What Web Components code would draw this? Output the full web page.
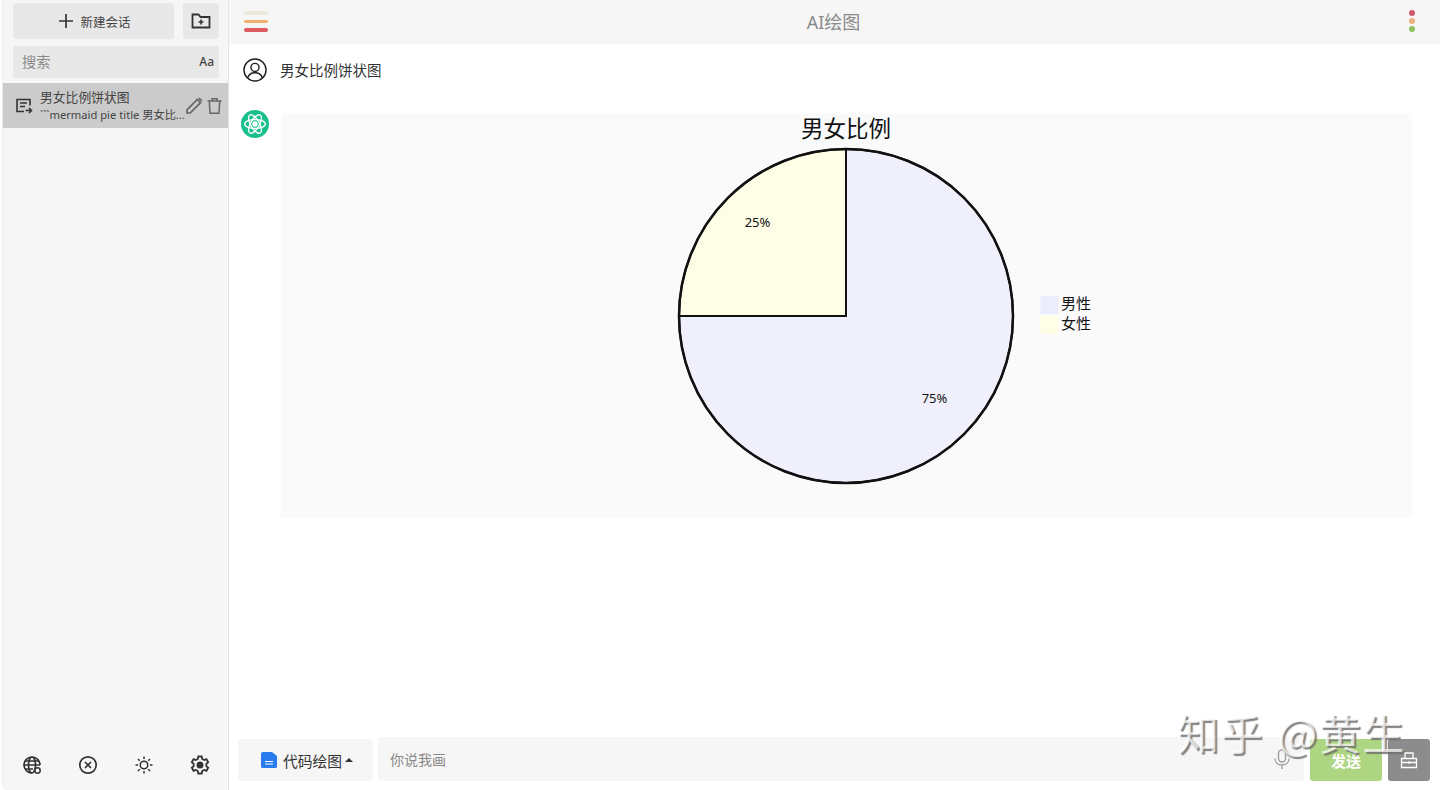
<!DOCTYPE html>
<html lang="zh"><head><meta charset="utf-8"><title>AI绘图</title>
<style>
html,body{margin:0;padding:0;height:790px;overflow:hidden;background:#fff;font-family:"Noto Sans","Noto Sans CJK SC",sans-serif;color:#333}
</style></head><body>
<app-shell>
  <side-bar slot="side"></side-bar>
  <top-bar slot="main"></top-bar>
  <chat-log slot="main"></chat-log>
  <input-bar slot="main"></input-bar>
  <water-mark slot="over"></water-mark>
</app-shell>
<script>
const def=(name,html)=>customElements.define(name,class extends HTMLElement{constructor(){super();this.attachShadow({mode:'open'}).innerHTML=html}});
def('app-shell',`<style>:host{display:flex;width:1440px;height:790px;position:relative;overflow:hidden}
.s{display:block;flex:none}.m{flex:1;display:flex;flex-direction:column;min-width:0}</style>
<div class="s"><slot name="side"></slot></div><div class="m"><slot name="main"></slot></div><slot name="over"></slot>`);

def('side-bar',`<style>
:host{display:flex;flex-direction:column;box-sizing:border-box;height:790px;margin-left:3px;width:226px;background:#f6f6f6;border-right:1px solid #e4e4e4;border-bottom-left-radius:6px;box-shadow:-1px 0 0 #ececec}
.top{display:flex;gap:9px;padding:3px 9px 0 10px}
.btn{height:36px;background:#e8e8e8;border-radius:3px;display:flex;align-items:center;justify-content:center}
.new{width:161px;font-size:12.500px;color:#444;gap:5px;padding-left:1px;box-sizing:border-box}
.folder{width:36px}
.search{display:flex;align-items:center;justify-content:space-between;height:32px;margin:7px 9px 0 10px;padding:0 5px 0 9px;background:#e8e8e8;border-radius:3px;font-size:14.200px;color:#8a8a8a}
.search span{margin-bottom:2px}
.search b{font-size:12px;font-weight:500;color:#444;margin-bottom:1px}
.item{display:flex;align-items:center;height:45px;margin-top:5px;background:#cbcbcb;box-sizing:border-box;padding-left:12px}
.item>svg{flex:none}
.txt{margin-left:7px;width:143px;min-width:0;flex:none}
.t{font-size:12.800px;line-height:16px;color:#444;margin-bottom:2px}
.d{font-size:11.200px;line-height:16px;color:#444;white-space:nowrap}
.acts{display:flex;gap:2px;align-items:center;margin-left:2px}
.fill{flex:1}
.bot{display:flex;justify-content:space-between;padding:0 18px 14px 19px;height:22px;align-items:center}
svg{display:block}
</style>
<div class="top"><div class="btn new"><svg width="18" height="18" viewBox="0 0 18 18"><path d="M9 2v14M2 9h14" stroke="#333" stroke-width="1.700" fill="none"/></svg><span>新建会话</span></div>
<div class="btn folder"><svg width="20" height="18" viewBox="0 0 20 18" fill="none" stroke="#333" stroke-width="1.800"><path d="M1.500 15.500V2.500h6l2 2.500h9v10.500z"/><path d="M10 7.500v5M7.500 10h5" stroke-width="1.600"/></svg></div></div>
<div class="search"><span>搜索</span><b>Aa</b></div>
<div class="item"><svg width="18" height="18" viewBox="0 0 18 18" fill="none" stroke="#333" stroke-width="1.600"><path d="M9 14.500H2V2.500h13v6"/><path d="M5 6h7M5 9.500h5"/><path d="M10.500 13.500h6M14 11l2.500 2.500L14 16"/></svg>
<div class="txt"><div class="t">男女比例饼状图</div><div class="d">\`\`\`mermaid pie title 男女比...</div></div>
<div class="acts"><svg width="19" height="19" viewBox="0 0 19 19" fill="none" stroke="#666" stroke-width="1.700"><path d="M2 13.800V17h3.200L15.500 6.700l-3.200-3.200zM13.800 2l3.200 3.200"/></svg>
<svg width="18" height="18" viewBox="0 0 18 18" fill="none" stroke="#666" stroke-width="1.500"><path d="M1.500 4h14M6 4V1.800h5V4M3.300 4l.7 12.200h9L13.700 4"/></svg></div></div>
<div class="fill"></div>
<div class="bot">
<svg width="20" height="20" viewBox="0 0 20 20" fill="none" stroke="#333" stroke-width="1.700"><path d="M10 18a8 8 0 1 1 8-8"/><ellipse cx="10" cy="10" rx="3.500" ry="8"/><path d="M2 10h16M3 6h14M3 14h8"/><circle cx="15.500" cy="15.500" r="2.700" stroke-width="1.500"/></svg>
<svg width="20" height="20" viewBox="0 0 20 20" fill="none" stroke="#333" stroke-width="1.700"><circle cx="10" cy="10" r="8.200"/><path d="M7 7l6 6M13 7l-6 6"/></svg>
<svg width="20" height="20" viewBox="0 0 20 20" fill="none" stroke="#333" stroke-width="1.500"><circle cx="10" cy="10" r="3.800"/><path d="M10 1.500v2.500M10 16v2.500M1.500 10H4M16 10h2.500M4 4l1.700 1.700M14.300 14.300L16 16M4 16l1.700-1.700M14.300 5.700L16 4"/></svg>
<svg width="20" height="20" viewBox="0 0 20 20" fill="none" stroke="#333" stroke-width="1.800"><path d="M8.300 1.500h3.400l.5 2.500 1.900 1 2.400-.8 1.700 3-1.900 1.700v2.200l1.900 1.700-1.700 3-2.400-.8-1.900 1-.5 2.500H8.300l-.5-2.500-1.900-1-2.400.8-1.700-3 1.900-1.700V8.900L1.800 7.200l1.700-3 2.400.8 1.900-1z"/><circle cx="10" cy="10" r="2.600" fill="#333"/></svg>
</div>`);

def('top-bar',`<style>:host{display:block;flex:none;height:44px;background:#f6f6f6;position:relative}
.w{display:flex;align-items:center;justify-content:space-between;height:42px;padding:0 25px 0 15px}
.burger{display:flex;flex-direction:column;gap:5px;width:24px;margin-top:1px}.burger i{display:block;height:3.500px;border-radius:2px}
h1{margin:0;font-size:18px;font-weight:400;color:#8a8a8a;position:relative;left:-5px}
.dots{display:flex;flex-direction:column;gap:2px;width:6px}.dots i{display:block;width:6px;height:6px;border-radius:50%}
</style><div class="w"><div class="burger"><i style="background:#ece8d8"></i><i style="background:#eeb06e"></i><i style="background:#dd5a62"></i></div><h1>AI绘图</h1><div class="dots"><i style="background:#cf5a6e"></i><i style="background:#ecb27c"></i><i style="background:#90bf5e"></i></div></div>`);

def('chat-log',`<style>:host{display:block;flex:1;min-height:0;font-size:14.500px;color:#333}
.q{display:flex;align-items:center;height:52px;padding-left:14px;gap:13px}
.q span{margin-bottom:2px}
.a{display:flex;padding-left:12px;gap:12px;margin-top:14px}
.av{width:28px;height:28px;border-radius:50%;background:#19c08c;display:flex;align-items:center;justify-content:center;flex:none}
.card{width:1131px;height:405px;background:#fafafa;margin-top:3px}
svg{display:block}
text{font-family:"Noto Sans","Noto Sans CJK SC",sans-serif;fill:#111}
</style>
<div class="q"><svg width="24" height="24" viewBox="0 0 25 25" fill="none" stroke="#222" stroke-width="1.500"><circle cx="12.500" cy="12.500" r="11.500"/><circle cx="12.500" cy="9.800" r="4.200"/><path d="M4.800 20.800c1-3.700 4-5.500 7.700-5.500s6.700 1.800 7.700 5.500"/></svg><span>男女比例饼状图</span></div>
<div class="a"><div class="av"><svg width="24" height="24" viewBox="0 0 22 22" fill="none" stroke="#fff" stroke-width="1.200"><ellipse cx="11" cy="11" rx="9.500" ry="4"/><ellipse cx="11" cy="11" rx="9.500" ry="4" transform="rotate(60 11 11)"/><ellipse cx="11" cy="11" rx="9.500" ry="4" transform="rotate(120 11 11)"/><circle cx="11" cy="11" r="2.500" fill="#fff" stroke="none"/></svg></div>
<div class="card"><svg width="1131" height="405" viewBox="0 0 1131 405">
<g transform="translate(565,203)">
<path d="M0 0V-167A167 167 0 1 1 -167 0Z" fill="#f0f0fc" stroke="#111" stroke-width="2"/>
<path d="M0 0H-167A167 167 0 0 1 0 -167Z" fill="#fefee6" stroke="#111" stroke-width="2"/>
<path d="M0 -167A167 167 0 1 1 -167 0A167 167 0 0 1 0 -167Z" fill="none" stroke="#111" stroke-width="2.500"/>
<text x="-88.500" y="-92.500" font-size="13" text-anchor="middle" dominant-baseline="middle">25%</text>
<text x="88.500" y="83.500" font-size="13" text-anchor="middle" dominant-baseline="middle">75%</text>
<text x="0" y="-187.500" font-size="22.500" text-anchor="middle" dominant-baseline="central">男女比例</text>
<rect x="194.500" y="-20" width="18" height="18" fill="#ececfc"/><text x="215" y="-11" font-size="15" dominant-baseline="middle">男性</text>
<rect x="194.500" y="0" width="18" height="18" fill="#fefee6"/><text x="215" y="9" font-size="15" dominant-baseline="middle">女性</text>
</g></svg></div></div>`);

def('input-bar',`<style>:host{display:flex;flex:none;height:44px;padding:0 10px 9px 9px;gap:5px;align-items:stretch}
.mode{width:135px;height:42px;align-self:flex-end;background:#f6f6f6;border-radius:3px;display:flex;align-items:center;justify-content:center;font-size:14.800px;color:#333;gap:6px;padding-left:3px;box-sizing:border-box}
.in{flex:1;background:#f6f6f6;border-radius:3px;display:flex;align-items:center;justify-content:space-between;padding:0 14px 0 12px;font-size:14px;color:#888}
.send{width:72px;height:42px;align-self:flex-end;background:#aed581;border-radius:3px;color:#fff;font-weight:700;font-size:15px;display:flex;align-items:center;justify-content:center;margin-left:1px}
.clr{width:42px;height:42px;align-self:flex-end;background:#8c8c8c;border-radius:3px;display:flex;align-items:center;justify-content:center;margin-left:1px}
.car{width:0;height:0;border:4px solid transparent;border-top:0;border-bottom:4px solid #333;margin-left:-3px}
svg{display:block}
</style>
<div class="mode"><svg width="16" height="16" viewBox="0 0 16 16"><path d="M2 0h9l5 4v10.500a1.500 1.500 0 0 1-1.500 1.500h-13A1.500 1.500 0 0 1 0 14.500V2a2 2 0 0 1 2-2z" fill="#2a7af0"/><path d="M4 9.500h8M4 12h8" stroke="#fff" stroke-width="1.200"/></svg><span>代码绘图</span><i class="car"></i></div>
<div class="in"><span>你说我画</span><svg width="16" height="20" viewBox="0 0 16 20" fill="none" stroke="#a0a0a0" stroke-width="1.400"><rect x="4.500" y="1" width="7" height="12" rx="3.500"/><path d="M1 9.500c0 4 3 6.500 7 6.500s7-2.500 7-6.500M8 16v4"/></svg></div>
<div class="send">发送</div>
<div class="clr"><svg width="18" height="18" viewBox="0 0 18 18" fill="none" stroke="#fff" stroke-width="1.300"><path d="M1.500 7.500h15V16.500h-15zM5 7.500V2h8v5.500M1.500 11.500h15M9 10v3"/></svg></div>`);

def('water-mark',`<style>:host{position:absolute;left:1177px;top:704px;font:400 42px/56px "Noto Sans CJK SC",sans-serif;color:rgba(255,255,255,.7);text-shadow:2px 2px 1px rgba(110,110,110,.85);white-space:nowrap;letter-spacing:1.400px;word-spacing:3px;pointer-events:none}</style>知乎 @黄生`);
</script></body></html>
